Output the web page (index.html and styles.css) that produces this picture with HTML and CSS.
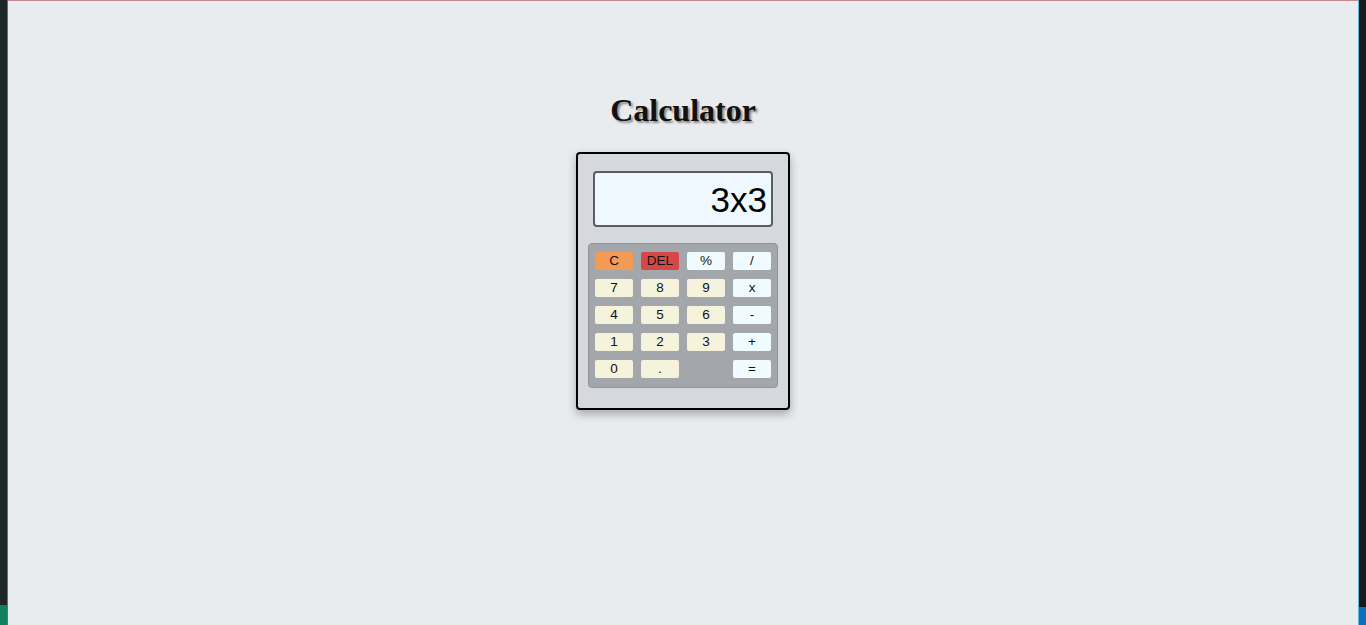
FILE: index.html
```html
<!DOCTYPE html>
<html lang="en">
<head>
<meta charset="utf-8">
<title>Calculator</title>
<link rel="stylesheet" href="styles.css">
</head>
<body>
<div class="edge edge-left"><div class="edge-fill"></div><div class="edge-foot foot-green"></div></div>
<main class="page">
  <h1 class="title">Calculator</h1>
  <div class="calc">
    <div class="display">3x3</div>
    <div class="keys">
      <button class="key key-clear">C</button>
      <button class="key key-del">DEL</button>
      <button class="key key-op">%</button>
      <button class="key key-op">/</button>
      <button class="key key-num">7</button>
      <button class="key key-num">8</button>
      <button class="key key-num">9</button>
      <button class="key key-op">x</button>
      <button class="key key-num">4</button>
      <button class="key key-num">5</button>
      <button class="key key-num">6</button>
      <button class="key key-op">-</button>
      <button class="key key-num">1</button>
      <button class="key key-num">2</button>
      <button class="key key-num">3</button>
      <button class="key key-op">+</button>
      <button class="key key-num">0</button>
      <button class="key key-num">.</button>
      <span class="key-gap"></span>
      <button class="key key-op">=</button>
    </div>
  </div>
</main>
<div class="edge edge-right"><div class="edge-fill"></div><div class="edge-foot foot-blue"></div></div>
</body>
</html>
```
FILE: styles.css
```css
html, body {
  margin: 0;
  padding: 0;
  height: 100%;
  overflow: hidden;
}
body {
  display: flex;
  background: #1c2424;
  font-family: "Liberation Sans", Arial, sans-serif;
}
.edge {
  width: 8px;
  display: flex;
  flex-direction: column;
  background: #1e2727;
}
.edge-left { border-right: 1px solid #2a8a8a; width: 7px; }
.edge-right { border-left: 1px solid #5fb6d6; width: 7px; background: #141c1c; }
.edge-fill { flex: 1; }
.edge-foot { height: 20px; }
.foot-green { background: #10805e; }
.foot-blue { background: #0b6fc0; height: 18px; }
.page {
  width: 1350px;
  height: 625px;
  box-sizing: border-box;
  background: #e9ecef;
  border-top: 1px solid #c9858e;
  display: flex;
  flex-direction: column;
  align-items: center;
  padding-top: 91px;
}
.title {
  margin: 0 0 23px;
  font-family: "Liberation Serif", "Times New Roman", serif;
  font-size: 32px;
  font-weight: bold;
  color: #111;
  text-shadow: 2px 2px 2px #8a8a8a;
  line-height: 37px;
}
.calc {
  width: 214px;
  height: 258px;
  box-sizing: border-box;
  border: 2px solid #000;
  border-radius: 4px;
  background: #d5d9dd;
  box-shadow: 0 4px 10px rgba(0,0,0,0.3);
  padding: 17px 10px 0;
  display: flex;
  flex-direction: column;
}
.display {
  margin: 0 5px;
  height: 56px;
  box-sizing: border-box;
  border: 2px solid #5a5e62;
  border-radius: 4px;
  background: #f0f8ff;
  font-size: 35px;
  color: #000;
  text-align: right;
  line-height: 54px;
  padding-right: 4px;
}
.keys {
  margin-top: 16px;
  height: 145px;
  box-sizing: border-box;
  background: #a3a7ab;
  border: 1px solid #909498;
  border-radius: 4px;
  padding: 8px 6px 0;
  display: grid;
  grid-template-columns: repeat(4, 38px);
  grid-auto-rows: 18px;
  column-gap: 8px;
  row-gap: 9px;
}
.key {
  margin: 0;
  padding: 0;
  border: none;
  border-radius: 2px;
  font-family: "Liberation Sans", Arial, sans-serif;
  font-size: 13.5px;
  color: #111;
  line-height: 18px;
  text-align: center;
}
.key-num { background: #f5f3dc; }
.key-op { background: #f0fbff; }
.key-clear { background: #f39a55; }
.key-del { background: #d64848; }
```
